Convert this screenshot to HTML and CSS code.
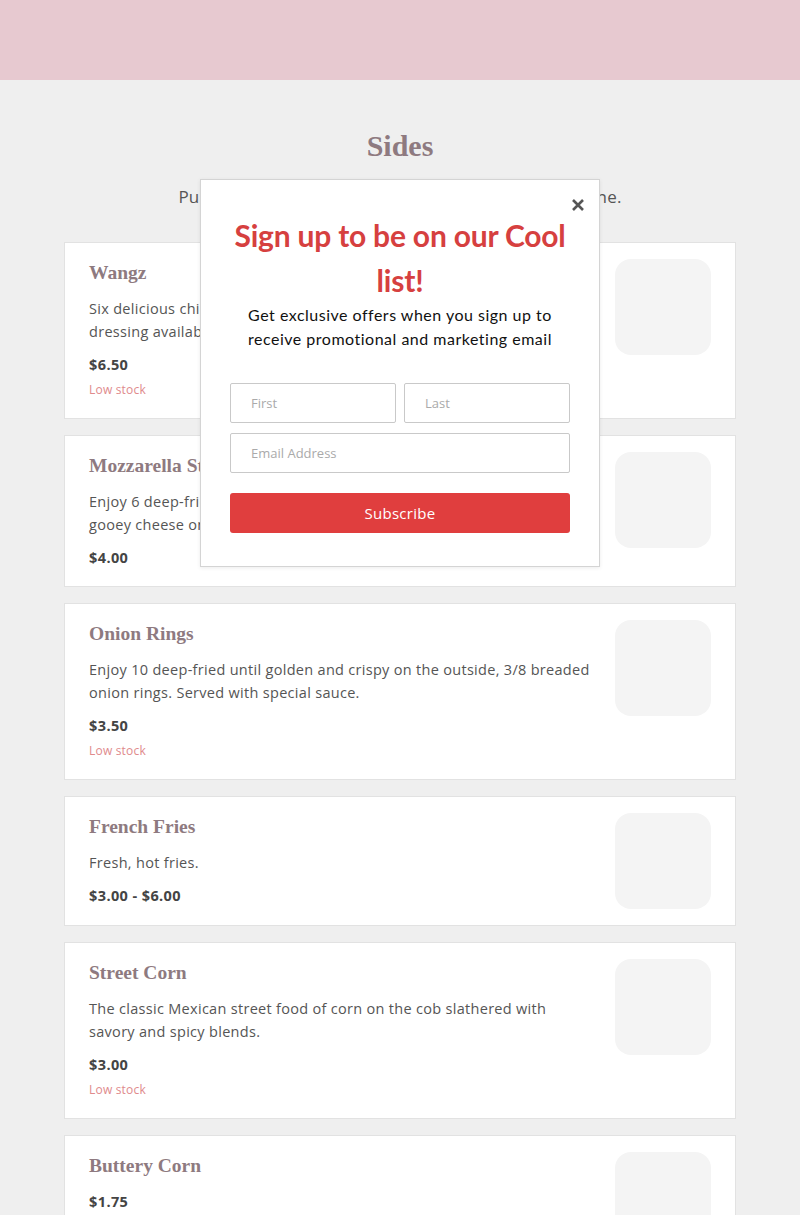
FILE: index.html
```html
<!DOCTYPE html>
<html lang="en">
<head>
<meta charset="utf-8">
<title>Sides</title>
<link rel="stylesheet" href="styles.css">
</head>
<body>
<header class="topbar"></header>
<main class="menu">
  <h1 class="menu-title">Sides</h1>
  <p class="menu-sub">Pump up your meal with a side to share with everyone.</p>
  <section class="items">
    <article class="item">
      <div class="item-body">
        <h2 class="item-name">Wangz</h2>
        <p class="item-desc">Six delicious chicken wings with your choice of sauce. Blue cheese dressing available.</p>
        <p class="item-price">$6.50</p>
        <p class="item-stock">Low stock</p>
      </div>
      <div class="item-thumb"></div>
    </article>
    <article class="item">
      <div class="item-body">
        <h2 class="item-name">Mozzarella Sticks</h2>
        <p class="item-desc">Enjoy 6 deep-fried mozzarella sticks, golden and crispy outside with gooey cheese on the inside. Served with marinara.</p>
        <p class="item-price">$4.00</p>
      </div>
      <div class="item-thumb"></div>
    </article>
    <article class="item">
      <div class="item-body">
        <h2 class="item-name">Onion Rings</h2>
        <p class="item-desc">Enjoy 10 deep-fried until golden and crispy on the outside, 3/8 breaded onion rings. Served with special sauce.</p>
        <p class="item-price">$3.50</p>
        <p class="item-stock">Low stock</p>
      </div>
      <div class="item-thumb"></div>
    </article>
    <article class="item">
      <div class="item-body">
        <h2 class="item-name">French Fries</h2>
        <p class="item-desc">Fresh, hot fries.</p>
        <p class="item-price">$3.00 - $6.00</p>
      </div>
      <div class="item-thumb"></div>
    </article>
    <article class="item">
      <div class="item-body">
        <h2 class="item-name">Street Corn</h2>
        <p class="item-desc">The classic Mexican street food of corn on the cob slathered with savory and spicy blends.</p>
        <p class="item-price">$3.00</p>
        <p class="item-stock">Low stock</p>
      </div>
      <div class="item-thumb"></div>
    </article>
    <article class="item">
      <div class="item-body">
        <h2 class="item-name">Buttery Corn</h2>
        <p class="item-price">$1.75</p>
      </div>
      <div class="item-thumb"></div>
    </article>
  </section>
</main>

<div class="modal" role="dialog" aria-label="Sign up">
  <button class="modal-close" aria-label="Close">
    <svg width="14" height="14" viewBox="0 0 14 14"><path d="M2 2 L12 12 M12 2 L2 12" stroke="#555" stroke-width="2.6" stroke-linecap="butt"/></svg>
  </button>
  <h2 class="modal-title">Sign up to be on our Cool list!</h2>
  <p class="modal-text">Get exclusive offers when you sign up to receive promotional and marketing email</p>
  <form class="modal-form">
    <div class="name-row">
      <input class="field" type="text" placeholder="First">
      <input class="field" type="text" placeholder="Last">
    </div>
    <input class="field" type="email" placeholder="Email Address">
    <button class="subscribe" type="button">Subscribe</button>
  </form>
</div>
</body>
</html>
```
FILE: styles.css
```css
html, body {
  margin: 0;
  padding: 0;
  overflow: hidden;
}
body {
  background: #efefef;
  font-family: "Open Sans", "Liberation Sans", sans-serif;
  color: #555;
}
.topbar {
  height: 80px;
  background: #e7c9d0;
}
.menu {
  padding: 0 64px;
}
.menu-title {
  margin: 0;
  padding-top: 46px;
  text-align: center;
  font-family: "Liberation Serif", "DejaVu Serif", serif;
  font-weight: 700;
  font-size: 30px;
  line-height: 40px;
  color: #8e7a80;
}
.menu-sub {
  margin: 18px 0 0;
  text-align: center;
  font-size: 17px;
  line-height: 26px;
  color: #555;
  letter-spacing: 0.15px;
}
.items {
  margin-top: 32px;
  display: flex;
  flex-direction: column;
  gap: 16px;
}
.item {
  display: flex;
  align-items: flex-start;
  gap: 20px;
  background: #fff;
  border: 1px solid #e2e2e2;
  padding: 16px 24px;
}
.item-body {
  flex: 1;
}
.item-name {
  margin: 0;
  font-family: "Liberation Serif", "DejaVu Serif", serif;
  font-weight: 700;
  font-size: 19.5px;
  line-height: 28px;
  color: #8e7a80;
}
.item-desc {
  margin: 10px 0 0;
  font-size: 14.5px;
  line-height: 23px;
  color: #555;
  letter-spacing: 0.3px;
}
.item-price {
  margin: 10px 0 0;
  font-size: 14.5px;
  line-height: 24px;
  font-weight: 700;
  color: #444;
  letter-spacing: 0.4px;
}
.item-stock {
  margin: 3px 0 2px;
  font-size: 12px;
  line-height: 20px;
  color: #e08a8c;
  letter-spacing: 0.2px;
}
.item-thumb {
  flex: none;
  width: 96px;
  height: 96px;
  border-radius: 16px;
  background: #f4f4f4;
}

.modal {
  position: absolute;
  left: 200px;
  top: 179px;
  width: 400px;
  box-sizing: border-box;
  background: #fff;
  border: 1px solid #d4d4d4;
  box-shadow: 0 1px 4px rgba(0,0,0,0.08);
  padding: 33px 29px 33px;
}
.modal-close {
  position: absolute;
  top: 17px;
  right: 13px;
  width: 16px;
  height: 16px;
  padding: 0;
  border: 0;
  background: none;
  display: flex;
  align-items: center;
  justify-content: center;
}
.modal-title {
  margin: 0;
  text-align: center;
  font-family: "Lato", "Open Sans", sans-serif;
  font-weight: 700;
  font-size: 30px;
  line-height: 45px;
  color: #d6403f;
  letter-spacing: -0.2px;
}
.modal-text {
  margin: 0;
  padding: 0 4px;
  text-align: center;
  font-family: "Lato", "Open Sans", sans-serif;
  font-size: 16px;
  line-height: 24px;
  color: #111;
  letter-spacing: 0.5px;
}
.modal-form {
  margin-top: 32px;
  display: flex;
  flex-direction: column;
  gap: 10px;
}
.name-row {
  display: flex;
  gap: 8px;
}
.name-row .field {
  flex: 1;
  min-width: 0;
}
.field {
  box-sizing: border-box;
  height: 40px;
  border: 1px solid #c9c9c9;
  border-radius: 2px;
  padding: 0 20px;
  font-family: "Open Sans", "Liberation Sans", sans-serif;
  font-size: 13px;
  color: #333;
  background: #fff;
}
.field::placeholder {
  color: #aaa;
}
.subscribe {
  margin-top: 10px;
  height: 40px;
  border: 0;
  border-radius: 3px;
  background: #e03e3e;
  color: #fff;
  font-family: "Open Sans", "Liberation Sans", sans-serif;
  font-size: 15px;
  letter-spacing: 0.3px;
}
```
